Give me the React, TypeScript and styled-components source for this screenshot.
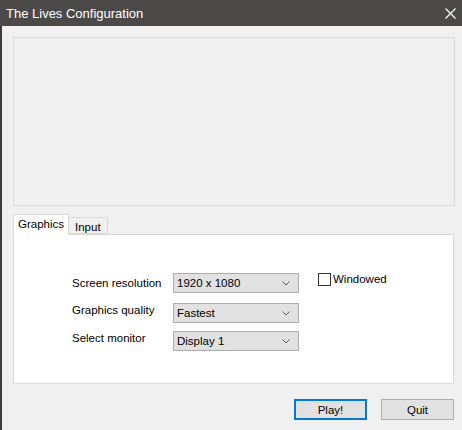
import { createGlobalStyle, styled } from "styled-components";

const Global = createGlobalStyle`
  html, body {
    margin: 0;
    padding: 0;
    background: #f0f0f0;
  }
  * { box-sizing: border-box; }
`;

const rows = [
  { label: "Screen resolution", value: "1920 x 1080", top: 38, labelShift: 0 },
  { label: "Graphics quality", value: "Fastest", top: 10, labelShift: -3 },
  { label: "Select monitor", value: "Display 1", top: 8, labelShift: -3 },
];

function Chevron() {
  return (
    <svg width="8" height="5" viewBox="0 0 8 5">
      <path d="M0.5 0.5 L4 4 L7.5 0.5" fill="none" stroke="#5a5a5a" strokeWidth="1" />
    </svg>
  );
}

function CloseIcon() {
  return (
    <svg width="11" height="11" viewBox="0 0 11 11">
      <path d="M0.5 0.5 L10.5 10.5 M10.5 0.5 L0.5 10.5" stroke="#ffffff" strokeWidth="1.2" />
    </svg>
  );
}

export default function App() {
  return (
    <>
      <Global />
      <Window>
        <TitleBar>
          <Title>The Lives Configuration</Title>
          <CloseButton>
            <CloseIcon />
          </CloseButton>
        </TitleBar>
        <Body>
          <Banner />
          <Tabs>
            <Tab $active>Graphics</Tab>
            <Tab>Input</Tab>
          </Tabs>
          <TabPanel>
            {rows.map((r, i) => (
              <FormRow key={r.label} $top={r.top}>
                <Label $shift={r.labelShift}>{r.label}</Label>
                <Combo>
                  <span>{r.value}</span>
                  <Chevron />
                </Combo>
                {i === 0 && (
                  <CheckLabel>
                    <CheckBox />
                    Windowed
                  </CheckLabel>
                )}
              </FormRow>
            ))}
          </TabPanel>
          <Buttons>
            <Button $primary>Play!</Button>
            <Button>Quit</Button>
          </Buttons>
        </Body>
      </Window>
    </>
  );
}

const Window = styled.div`
  width: 462px;
  height: 430px;
  display: flex;
  flex-direction: column;
  background: #f0f0f0;
  font-family: "Liberation Sans", Arial, sans-serif;
  font-size: 11.5px;
  color: #000;
  overflow: hidden;
`;

const TitleBar = styled.div`
  height: 26px;
  background: #4b4a48;
  display: flex;
  align-items: center;
  justify-content: space-between;
  padding: 0 6px 0 6px;
`;

const Title = styled.div`
  color: #fff;
  font-size: 13px;
`;

const CloseButton = styled.div`
  display: flex;
  align-items: center;
  margin-top: 1px;
`;

const Body = styled.div`
  flex: 1;
  border-left: 2px solid #3a3a3a;
  padding: 11px 7px 0 11px;
  display: flex;
  flex-direction: column;
`;

const Banner = styled.div`
  height: 169px;
  border: 1px solid #d9d9d9;
  background: #f0f0f0;
`;

const Tabs = styled.div`
  display: flex;
  align-items: flex-end;
  margin-top: 8px;
  height: 20px;
`;

const Tab = styled.div<{ $active?: boolean }>`
  height: ${(p) => (p.$active ? "21px" : "17px")};
  margin-bottom: ${(p) => (p.$active ? "-1px" : "0")};
  padding: 0 ${(p) => (p.$active ? "4px" : "6px")};
  padding-top: 2px;
  background: ${(p) => (p.$active ? "#fff" : "#f0f0f0")};
  border: 1px solid #d9d9d9;
  border-bottom: ${(p) => (p.$active ? "none" : "1px solid #d9d9d9")};
  ${(p) => (!p.$active ? "border-left: none;" : "")}
  position: relative;
  z-index: ${(p) => (p.$active ? 1 : 0)};
  line-height: 14px;
`;

const TabPanel = styled.div`
  width: 441px;
  height: 150px;
  background: #fff;
  border: 1px solid #d9d9d9;
  padding-left: 58px;
`;

const FormRow = styled.div<{ $top: number }>`
  display: flex;
  align-items: center;
  margin-top: ${(p) => p.$top}px;
  height: 20px;
`;

const Label = styled.div<{ $shift: number }>`
  width: 101px;
  position: relative;
  top: ${(p) => p.$shift}px;
`;

const Combo = styled.div`
  width: 126px;
  height: 20px;
  background: #e1e1e1;
  border: 1px solid #adadad;
  display: flex;
  align-items: center;
  justify-content: space-between;
  padding: 0 8px 0 3px;
  line-height: 16px;
`;

const CheckLabel = styled.div`
  display: flex;
  align-items: center;
  gap: 2px;
  margin-left: 19px;
  align-self: flex-start;
  line-height: 13px;
`;

const CheckBox = styled.span`
  display: inline-block;
  width: 13px;
  height: 13px;
  border: 1px solid #333;
  background: #fff;
`;

const Buttons = styled.div`
  display: flex;
  justify-content: flex-end;
  gap: 14px;
  margin-top: 15px;
  width: 441px;
`;

const Button = styled.div<{ $primary?: boolean }>`
  width: 73px;
  height: 21px;
  display: flex;
  align-items: center;
  justify-content: center;
  background: #e1e1e1;
  border: ${(p) => (p.$primary ? "2px solid #0078d7" : "1px solid #adadad")};
`;
